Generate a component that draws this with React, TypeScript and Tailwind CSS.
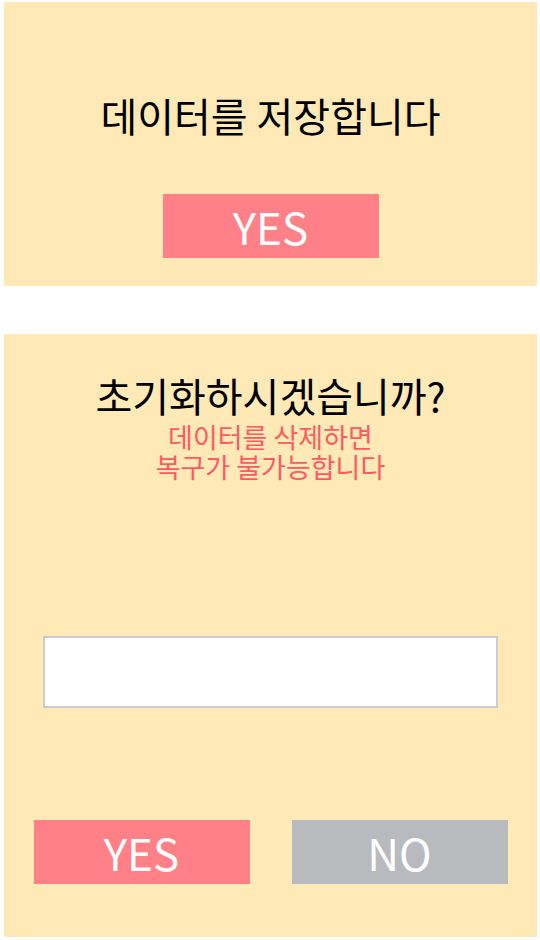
export default function App() {
  return (
    <div
      className="min-h-[940px] w-[540px] bg-white pt-[2px] pl-[4px]"
      style={{ fontFamily: '"Noto Sans CJK KR", "Noto Sans", sans-serif' }}
    >
      <SaveDialog />
      <ResetDialog />
    </div>
  );
}

function SaveDialog() {
  return (
    <section className="flex h-[284px] w-[533px] flex-col items-center bg-[#ffe9b6] pt-[89px]">
      <h1 className="text-[40px] leading-[48px] font-normal text-black">데이터를 저장합니다</h1>
      <button
        type="button"
        className="mt-[55px] flex h-[64px] w-[216px] items-center justify-center bg-[#ff8086] text-[44px] leading-none text-white"
      >
        YES
      </button>
    </section>
  );
}

function ResetDialog() {
  return (
    <section className="mt-[48px] flex h-[603px] w-[533px] flex-col items-center bg-[#ffe9b6] pt-[37px]">
      <h1 className="text-[40px] leading-[48px] font-normal text-black">초기화하시겠습니까?</h1>
      <p className="mt-[3px] text-center text-[27px] leading-[30px] text-[#ff5a62]">
        데이터를 삭제하면
        <br />
        복구가 불가능합니다
      </p>
      <input
        type="text"
        className="mt-[154px] h-[72px] w-[455px] border-2 border-[#cccccc] bg-white px-3 text-[24px] outline-none"
      />
      <div className="mt-[112px] flex gap-[42px]">
        <button
          type="button"
          className="flex h-[64px] w-[216px] items-center justify-center bg-[#ff8086] text-[44px] leading-none text-white"
        >
          YES
        </button>
        <button
          type="button"
          className="flex h-[64px] w-[216px] items-center justify-center bg-[#b9babe] text-[44px] leading-none text-white"
        >
          NO
        </button>
      </div>
    </section>
  );
}
